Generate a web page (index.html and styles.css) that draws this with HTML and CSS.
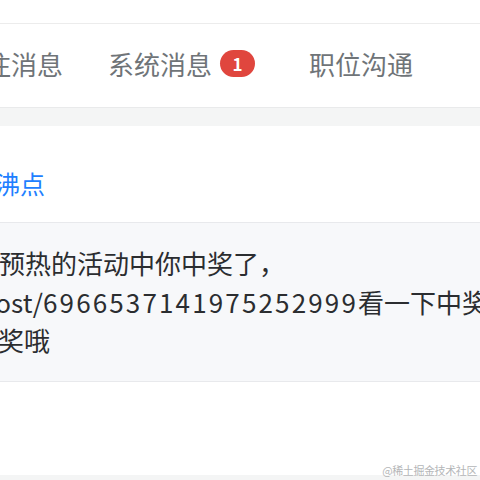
FILE: index.html
```html
<!DOCTYPE html>
<html lang="zh-CN">
<head>
  <meta charset="UTF-8">
  <meta name="viewport" content="width=device-width, initial-scale=1.0">
  <title>消息中心</title>
  <link rel="stylesheet" href="styles.css">
</head>
<body>

  <div class="page">
    <div class="top"></div>

    <!-- Tabs -->
    <div class="tabs">
      <div class="tab">关注消息</div>
      <div class="tab">系统消息 <span class="badge">1</span></div>
      <div class="tab">职位沟通</div>
    </div>

    <!-- Message card -->
    <div class="feed">
      <div class="card">
        <div class="source">沸点</div>
        <div class="quote">
          <span class="lead">恭喜</span>预热的活动中你中奖了，<br>
          in/post/<span class="num">6966537141975252999</span>看一下中奖名单<br>
          去领奖哦
        </div>
      </div>
    </div>

    <div class="watermark">@稀土掘金技术社区</div>
  </div>

</body>
</html>
```

FILE: styles.css
```css
body {
  margin: 0;
  padding: 0;
  font-family: "Noto Sans CJK SC", "Noto Sans", sans-serif;
  background-color: #f4f5f5;
}

.page {
  position: relative;
  width: 480px;
  height: 480px;
  overflow: hidden;
}

.top {
  height: 23px;
  background-color: #fff;
  border-bottom: 1px solid #ececec;
}

.tabs {
  display: flex;
  align-items: center;
  gap: 45px;
  height: 84px;
  margin-left: -41px;
  padding-bottom: 4px;
  box-sizing: border-box;
  background-color: #fff;
  border-bottom: 1px solid #e9eaeb;
  white-space: nowrap;
}

.tab {
  display: flex;
  align-items: center;
  font-size: 26px;
  color: #6f7478;
}

.badge {
  display: inline-flex;
  align-items: center;
  justify-content: center;
  width: 35px;
  height: 27px;
  margin: 0 9px 0 8px;
  border-radius: 14px;
  background-color: #e0463e;
  color: #fff;
  font-size: 17px;
  font-weight: 700;
  line-height: 1;
}

.feed {
  padding-top: 18px;
}

.card {
  margin-left: -54px;
  padding-bottom: 93px;
  background-color: #fff;
}

.source {
  padding: 40px 0 22px 49px;
  font-size: 25px;
  line-height: 34px;
  color: #1e80ff;
}

.quote {
  padding: 21px 0;
  background-color: #f7f8fa;
  border-top: 1px solid #e8e9ec;
  border-bottom: 1px solid #e8e9ec;
  font-size: 26px;
  line-height: 38.5px;
  color: #2b2d30;
  white-space: nowrap;
}

.lead {
  letter-spacing: 0.5px;
}

.num {
  letter-spacing: 2.15px;
}

.watermark {
  position: absolute;
  right: 3px;
  bottom: 2px;
  font-size: 11px;
  letter-spacing: -0.4px;
  color: #b4b6b8;
}
```
